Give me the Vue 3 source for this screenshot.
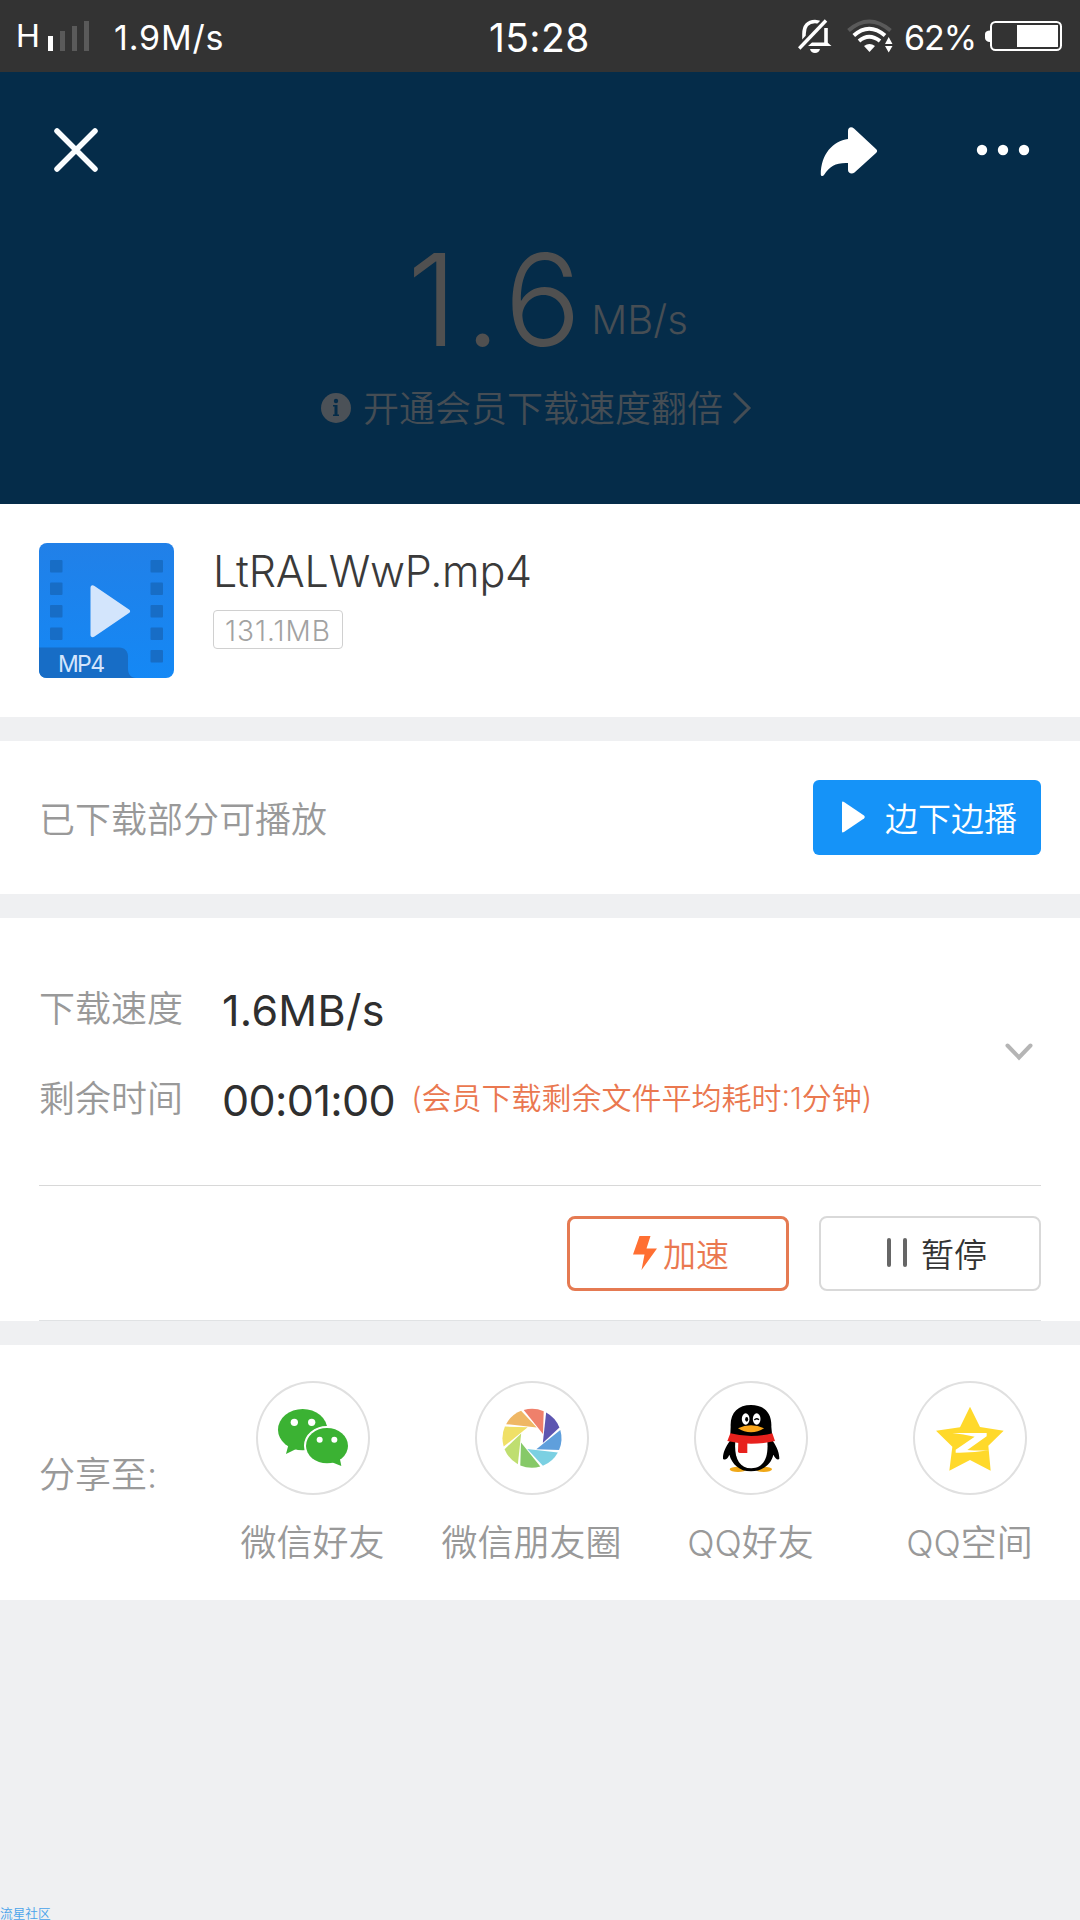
<template>
  <div class="page">
    <div class="status">
      <span class="net">H</span>
      <svg class="signal" width="42" height="30" viewBox="0 0 42 30">
        <rect x="0" y="15" width="5" height="15" fill="#fff" />
        <rect x="12" y="10" width="5" height="20" fill="#5a5a5a" />
        <rect x="24" y="5" width="5" height="25" fill="#5a5a5a" />
        <rect x="36" y="0" width="5" height="30" fill="#5a5a5a" />
      </svg>
      <span class="rate">1.9M/s</span>
      <span class="clock">15:28</span>
      <svg class="bell" width="34" height="34" viewBox="0 0 34 34">
        <path d="M6 24V15C6 7 10 2.5 17 2.5c3 0 5 .8 7 2.3M28 9v16" fill="none" stroke="#fff" stroke-width="3.6" />
        <path d="M10 27L14 23.5H29.5L33.5 27ZM12 30h10c-.6 2.6-2.4 4-5 4s-4.400-1.400-5-4Z" fill="#fff" />
        <path d="M2 28.500L28.500 1" stroke="#333" stroke-width="8" />
        <path d="M1.200 29.500L28 1.500" stroke="#fff" stroke-width="3.400" />
      </svg>
      <svg class="wifi" width="46" height="34" viewBox="0 0 46 34">
        <g fill="none" stroke-width="4">
          <path d="M1.500 11.500Q22 -6.500 43.500 11.500" stroke="#5a5a5a" />
          <path d="M6.800 16.500Q22 3 38 16.500" stroke="#fff" />
          <path d="M12 22Q22 13.500 33 22" stroke="#fff" />
        </g>
        <path d="M17 27Q22.500 23 28 27L22.500 33Z" fill="#fff" />
        <path d="M38 25L41.700 18L45.500 25ZM38 27L41.700 33.500L45.500 27Z" fill="#fff" />
      </svg>
      <span class="percent">62%</span>
      <svg class="battery" width="78" height="30" viewBox="0 0 78 30">
        <path d="M5 9.500C2 9.500 0 11 0 13v4c0 2 2 4 5 4Z" fill="#fff" />
        <rect x="6" y="1" width="70" height="28" rx="4.500" fill="none" stroke="#fff" stroke-width="2" />
        <rect x="32" y="4" width="41" height="22" fill="#fff" />
      </svg>
    </div>

    <div class="hero">
      <div class="nav">
        <svg class="close" width="46" height="46" viewBox="0 0 46 46">
          <path d="M4 4L42 42M42 4L4 42" stroke="#fafdff" stroke-width="5.500" stroke-linecap="round" />
        </svg>
        <svg class="forward" width="58" height="50" viewBox="0 0 58 50">
          <path d="M28 4c0-4 3.500-4.500 6-2.500L56 22c1.500 1.500 1.500 2.500 0 4L34.500 45.500c-2.500 2-6.500 1-6.500-2.500V36C16 35.500 10 39 4 48c-1 1.500-3 1.500-3.200-.5C1 27 13 14 28 12Z" fill="#fff" />
        </svg>
        <svg class="more" width="54" height="12" viewBox="0 0 54 12">
          <circle cx="6" cy="6" r="5.200" /><circle cx="27" cy="6" r="5.200" /><circle cx="48" cy="6" r="5.200" />
        </svg>
      </div>
      <div class="speed">
        <span class="num">1.6</span>
        <span class="unit">MB/s</span>
      </div>
      <div class="vip">
        <svg width="30" height="30" viewBox="0 0 30 30">
          <circle cx="15" cy="15" r="15" fill="#4b5157" />
          <path d="M12 12h4.500v9.500h1.500v1.500h-6v-1.500h1.500V13.500h-1.500Z" fill="#052c49" />
          <circle cx="15" cy="8" r="2.200" fill="#052c49" />
        </svg>
        <span class="vip-text">开通会员下载速度翻倍</span>
        <svg width="20" height="34" viewBox="0 0 20 34">
          <path d="M2 2L17 17L2 32" fill="none" stroke="#454d54" stroke-width="3" />
        </svg>
      </div>
    </div>

    <div class="file">
      <svg class="thumb" width="135" height="135" viewBox="0 0 135 135">
        <defs>
          <linearGradient id="blue" x1="0" y1="0" x2="0" y2="1">
            <stop offset="0" stop-color="#2180e8" />
            <stop offset="1" stop-color="#1488f5" />
          </linearGradient>
        </defs>
        <rect width="135" height="135" rx="8" fill="url(#blue)" />
        <g fill="#176dc6">
          <rect v-for="n in 4" :key="'l' + n" x="11" :y="17 + (n - 1) * 22.500" width="12.500" height="12.500" rx="1" />
          <rect v-for="n in 5" :key="'r' + n" x="111.500" :y="17 + (n - 1) * 22.500" width="12.500" height="12.500" rx="1" />
          <path d="M0 104.500H80c6 0 9 4 9 9V126c0 5 3 9 8 9H8c-5 0-8-3-8-8Z" />
        </g>
        <path d="M51.500 45c0-3 2-3.500 4-2L90 66.500c1.500 1 1.500 2.500 0 3.500L55.500 93.500c-2 1.500-4 .5-4-1.500Z" fill="#d3e5fc" />
        <text x="19" y="128.500" textLength="47" class="mp4">MP4</text>
      </svg>
      <div class="info">
        <div class="name">LtRALWwP.mp4</div>
        <div class="size">131.1MB</div>
      </div>
    </div>

    <div class="play">
      <span class="label">已下载部分可播放</span>
      <button class="play-btn">
        <svg width="23" height="32" viewBox="0 0 23 32"><path d="M0 1.500Q0 0 2 1L22 14.500Q23.500 16 22 17.500L2 31Q0 32 0 30.500Z" fill="#fff" /></svg>
        <span>边下边播</span>
      </button>
    </div>

    <div class="detail">
      <div class="stats">
        <div class="rows">
          <div class="row">
            <span class="label">下载速度</span>
            <span class="value">1.6MB/s</span>
          </div>
          <div class="row">
            <span class="label">剩余时间</span>
            <span class="value time">00:01:00</span>
            <span class="tip">(会员下载剩余文件平均耗时:1分钟)</span>
          </div>
        </div>
        <svg class="down" width="30" height="20" viewBox="0 0 30 20">
          <path d="M3.500 3.500L15 15.500L26.500 3.500" fill="none" stroke="#b5b5b5" stroke-width="4" stroke-linecap="round" />
        </svg>
      </div>
      <div class="actions">
        <button class="btn fast">
          <svg width="24" height="34" viewBox="0 0 24 34"><path d="M6.500 0H17.500L13.500 12.500H24L8.500 34L11.500 18.500H0Z" fill="#ff6f32" /></svg>
          <span>加速</span>
        </button>
        <button class="btn pause">
          <svg width="20" height="30" viewBox="0 0 20 30">
            <rect width="4" height="29" rx="2" fill="#666" /><rect x="16" width="4" height="29" rx="2" fill="#666" />
          </svg>
          <span>暂停</span>
        </button>
      </div>
    </div>

    <div class="share">
      <span class="label share-label">分享至:</span>
      <div class="targets">
        <div v-for="t in targets" :key="t.name" class="target">
          <div class="circle">
            <svg v-if="t.icon === 'wechat'" width="114" height="114" viewBox="78 63 342 342">
              <g fill="#3bb233">
                <path d="M176 252L168 282L200 266Z" />
                <ellipse cx="218" cy="209" rx="74" ry="62" />
                <ellipse cx="291" cy="257" rx="67" ry="57" fill="#fff" stroke="#fff" stroke-width="4" />
                <path d="M328 288L334 318L304 306Z" />
                <ellipse cx="291" cy="257" rx="63" ry="53" />
              </g>
              <g fill="#fff">
                <circle cx="193" cy="187" r="11" /><circle cx="245" cy="187" r="11" />
                <circle cx="269" cy="239" r="9" /><circle cx="313" cy="239" r="9" />
              </g>
            </svg>
            <svg v-else-if="t.icon === 'moments'" width="114" height="114" viewBox="-57 -57.300 114 114">
              <path v-for="(c, i) in blades" :key="c" :fill="c" :transform="`rotate(${i * 45})`" d="M-8.300 -28.300A29.500 29.500 0 0 1 11.700 -27.100L11 -4.300Z" />
            </svg>
            <svg v-else-if="t.icon === 'qq'" width="114" height="114" viewBox="102 63 342 342">
              <g fill="#f0a818">
                <ellipse cx="234" cy="328" rx="25" ry="8" /><ellipse cx="311" cy="328" rx="25" ry="8" />
              </g>
              <path d="M212 200C210 158 234 135 273 135S336 158 334 200L338 242C352 262 358 280 358 296C354 302 346 296 340 284C334 312 308 334 273 334S216 312 208 284C202 298 194 302 189 296C188 280 196 262 210 242Z" />
              <path d="M226 244H322C326 290 312 325 274 325S222 290 226 244Z" fill="#fff" />
              <path d="M211 220Q273 236 337 220L345 243Q273 260 202 243Z" fill="#e8211d" />
              <path d="M235 244H262V279H239Q234 279 234 274Z" fill="#e8211d" />
              <ellipse cx="257" cy="177" rx="11.500" ry="17" fill="#fff" /><ellipse cx="290" cy="177" rx="11.500" ry="17" fill="#fff" />
              <ellipse cx="260" cy="178" rx="4.500" ry="7" />
              <path d="M283 180Q289 173 297 179" fill="none" stroke="#000" stroke-width="4" />
              <path d="M234 205Q252 196 273 196T312 205Q294 217 273 217T234 205Z" fill="#f9a51a" />
            </svg>
            <svg v-else width="114" height="114" viewBox="759 63 342 342">
              <path d="M930 140L960 201L1031 212L985 257L992 332L930 300L868 332L877 260L828 212L900 202Z" fill="#ffd92b" />
              <path d="M877 219H980V229L922 270Q956 273 988 271Q940 279 887 278V269L944 230Q910 222 877 219Z" fill="#fff" />
            </svg>
          </div>
          <span class="label">{{ t.name }}</span>
        </div>
      </div>
    </div>

    <div class="rest">流星社区</div>
  </div>
</template>

<script setup>
const targets = [
  { name: '微信好友', icon: 'wechat' },
  { name: '微信朋友圈', icon: 'moments' },
  { name: 'QQ好友', icon: 'qq' },
  { name: 'QQ空间', icon: 'qzone' },
]
// clockwise, starting from the top blade
const blades = ['#ef806b', '#5d55b0', '#5f9fdc', '#7bd0e2', '#86c968', '#bfde70', '#f0e067', '#efb765']
</script>

<style>
body {
  margin: 0;
  background: #eff0f2;
}
</style>

<style scoped>
.page {
  width: 1080px;
  height: 1920px;
  display: flex;
  flex-direction: column;
  overflow: hidden;
  background: #eff0f2;
  font-family: Inter, "Noto Sans CJK SC", sans-serif;
  font-weight: 350;
  white-space: nowrap;
}
svg {
  display: block;
  flex: none;
}
.status {
  height: 72px;
  box-sizing: border-box;
  padding: 0 17px 0 16px;
  display: flex;
  align-items: center;
  background: #333;
  color: #fff;
  font-weight: 400;
  font-size: 34px;
}
.net {
  width: 32px;
  font-size: 33px;
  font-family: "Liberation Sans", sans-serif;
}
.rate {
  width: 375px;
  margin-left: 24px;
  padding-top: 2px;
  letter-spacing: 0.800px;
}
.clock {
  width: 309px;
  padding-top: 2px;
  font-size: 39px;
  letter-spacing: 0.400px;
}
.wifi {
  margin-left: 15px;
}
.percent {
  width: 80px;
  margin-left: 11px;
  padding-top: 2px;
  letter-spacing: -1px;
}
.battery {
  margin-left: auto;
}
.hero {
  height: 432px;
  background: #052c49;
}
.nav {
  height: 156px;
  padding: 0 50px 0 53px;
  display: flex;
  align-items: center;
}
.forward {
  margin-left: 721px;
  margin-top: 4px;
}
.more {
  margin-left: auto;
  fill: #fff;
}
.speed {
  height: 144px;
  padding-left: 407px;
  display: flex;
  color: #505050;
}
.num {
  font-size: 128px;
  line-height: 144px;
  font-weight: 300;
  letter-spacing: 7px;
}
.unit {
  margin-left: 3px;
  padding-top: 67px;
  line-height: 50px;
  font-size: 40px;
  font-weight: 300;
  color: #474e54;
}
.vip {
  padding-left: 321px;
  height: 72px;
  display: flex;
  align-items: center;
  color: #454d54;
  font-size: 36px;
}
.vip-text {
  margin: 0 9px 4px 12px;
}
.file {
  height: 213px;
  margin-bottom: 24px;
  display: flex;
  background: #fff;
}
.thumb {
  margin: 39px 39px 0;
}
.mp4 {
  fill: #d3e5fc;
  font-size: 23px;
  font-weight: 400;
}
.name {
  margin-top: 41px;
  line-height: 52px;
  font-size: 43px;
  letter-spacing: -0.200px;
  color: #3a3a3a;
}
.size {
  margin-top: 13px;
  width: 130px;
  height: 39px;
  box-sizing: border-box;
  border: 1px solid #d0d0d0;
  border-radius: 4px;
  line-height: 41px;
  text-align: center;
  font-size: 28px;
  letter-spacing: 1px;
  color: #a2a2a2;
}
.label {
  font-size: 36px;
  color: #999;
}
.play {
  height: 153px;
  box-sizing: border-box;
  padding: 0 39px;
  margin-bottom: 24px;
  display: flex;
  align-items: center;
  justify-content: space-between;
  background: #fff;
}
.play .label {
  margin-bottom: 2px;
}
button {
  padding: 0;
  border: none;
  box-sizing: border-box;
  height: 75px;
  display: flex;
  align-items: center;
  font: inherit;
  font-size: 33px;
  background: #fff;
  border-radius: 6px;
}
.play-btn {
  width: 228px;
  padding: 0 0 2px 29px;
  gap: 20px;
  background: #1593f8;
  color: #fff;
}
.detail {
  height: 403px;
  margin-bottom: 24px;
  padding: 0 39px;
  box-sizing: border-box;
  background: #fff;
}
.stats {
  height: 268px;
  box-sizing: border-box;
  padding: 47px 7px 0 0;
  display: flex;
  justify-content: space-between;
  border-bottom: 1px solid #d8d8d8;
}
.row {
  height: 90px;
  display: flex;
  align-items: center;
}
.row .label {
  margin-bottom: 9px;
}
.value {
  margin-left: 39px;
  font-size: 43px;
  font-weight: 370;
  letter-spacing: 0.300px;
  color: #2f2f2f;
}
.time {
  letter-spacing: -0.600px;
}
.tip {
  margin-left: 16px;
  margin-bottom: 9px;
  font-size: 30px;
  color: #ea7850;
}
.down {
  margin-top: 77px;
}
.actions {
  height: 135px;
  box-sizing: border-box;
  display: flex;
  justify-content: flex-end;
  align-items: center;
  gap: 30px;
  border-bottom: 1px solid #e0e2e4;
}
.btn {
  width: 222px;
  border-radius: 8px;
}
.fast {
  border: 3px solid #e57a52;
  padding-left: 63px;
  gap: 6px;
  color: #ea7850;
}
.pause {
  border: 2px solid #d9d9d9;
  padding-left: 66px;
  gap: 14px;
  color: #333;
}
.share {
  height: 255px;
  display: flex;
  background: #fff;
}
.share-label {
  width: 164px;
  padding-left: 39px;
  line-height: 261px;
}
.targets {
  display: grid;
  grid-template-columns: repeat(4, 219px);
}
.target {
  padding-top: 36px;
  display: flex;
  flex-direction: column;
  align-items: center;
  gap: 19px;
}
.circle {
  width: 114px;
  height: 114px;
  border-radius: 50%;
  box-shadow: inset 0 0 0 2px #e0e0e0;
}
.rest {
  margin-top: auto;
  line-height: 12px;
  font-size: 12.700px;
  color: #4aa3ea;
}
</style>
